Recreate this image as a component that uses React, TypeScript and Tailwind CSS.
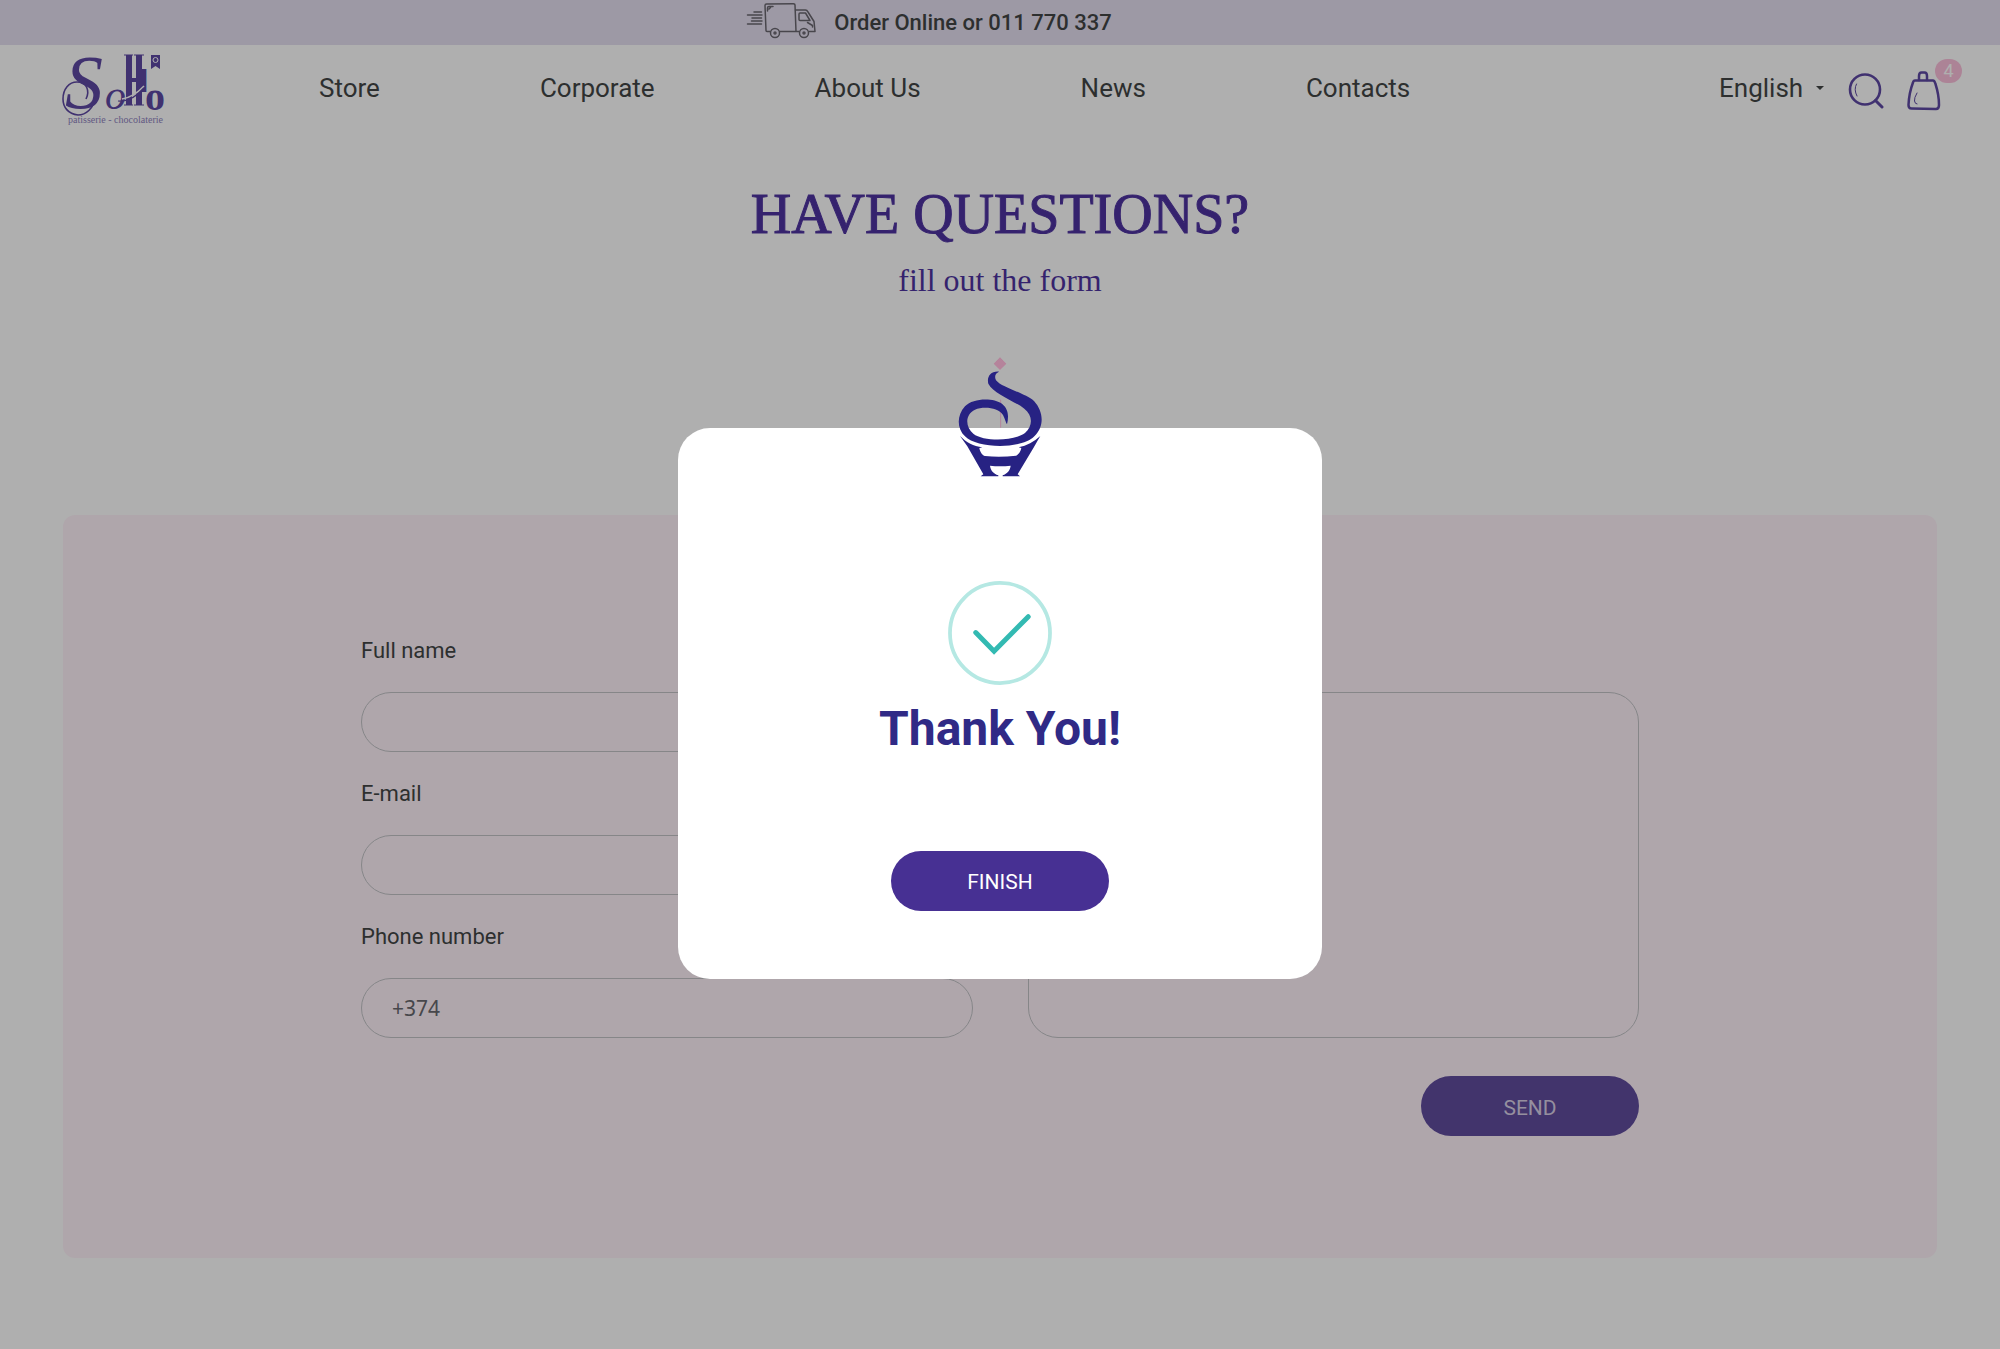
import { useState } from "react";

const navItems = [
  { href: "#store", label: "Store" },
  { href: "#corporate", label: "Corporate" },
  { href: "#about", label: "About Us" },
  { href: "#news", label: "News" },
  { href: "#contacts", label: "Contacts" },
];

const fields = [
  { id: "name", label: "Full name", type: "text", value: "" },
  { id: "email", label: "E-mail", type: "email", value: "" },
  { id: "phone", label: "Phone number", type: "tel", value: "+374" },
];

function Logo() {
  return (
    <svg className="overflow-visible" width="104" height="74" viewBox="0 0 104 74" fill="#4a3298">
      <text x="3" y="57" fontSize="76" fontStyle="italic" fontFamily="Liberation Serif, serif">
        S
      </text>
      <path
        d="M34 46C31 58 24 64 16 64C6 63 1 56 1 48C1 38 7 31 15 31C25 31 28 40 24 48"
        fill="none"
        stroke="#4a3298"
        strokeWidth="1.600"
      />
      <text x="43" y="58" fontSize="42" fontStyle="italic" fontFamily="Liberation Serif, serif">
        o
      </text>
      <text x="62" y="41" fontSize="34" fontWeight="700" fontFamily="Liberation Sans Narrow, Liberation Sans, sans-serif">
        H
      </text>
      <rect x="64" y="4" width="6" height="50" />
      <rect x="74" y="4" width="6" height="50" />
      <path d="M62 4H71M72 4H82M62 54H71M72 54H82" stroke="#4a3298" strokeWidth="1" />
      <path d="M60 48Q72 46 82 35" fill="none" stroke="#fff" strokeWidth="1.500" />
      <path d="M56 50Q70 51 82 37" fill="none" stroke="#4a3298" strokeWidth="1.200" />
      <text x="83" y="59" fontSize="40" fontWeight="700" fontFamily="Liberation Serif, serif">
        o
      </text>
      <path d="M89 4H98V18L93.500 15L89 18Z" />
      <circle cx="93.500" cy="9" r="2.500" fill="none" stroke="#fff" strokeWidth="1" />
      <text x="6" y="72" fontSize="10" opacity="0.7" fontFamily="Liberation Serif, serif">
        patisserie - chocolaterie
      </text>
    </svg>
  );
}

function TruckIcon() {
  return (
    <svg width="70" height="36" viewBox="0 1 70 36" fill="none" stroke="#58545e" strokeWidth="1.500" strokeLinecap="round" strokeLinejoin="round">
      <path d="M24 29.500H21Q20 29.500 20 28.500L19 3.500Q19 2 20.500 2L47.500 1.800Q49 1.800 49 3L50 29.500M34 29.500H53" />
      <path d="M49.500 8H59.500Q61 8 62 10L68 19.500L69 29.500H63.500" />
      <path d="M54 11H59.500L64 18.500H54Q53 18.500 53 17.500V12Q53 11 54 11Z" />
      <path d="M61.500 20.500L66.500 23.500V25" />
      <path d="M21.500 9V6Q21.500 4.500 23 4.500H27M23 7L24.500 5.500" />
      <circle cx="29" cy="31" r="4.500" />
      <circle cx="29" cy="31" r="1" />
      <circle cx="58" cy="31" r="4.500" />
      <circle cx="58" cy="31" r="1" />
      <path d="M8 10H15.500M1.500 13H16M6 16H15.500M5.500 19H16M1.500 22H15.500" />
    </svg>
  );
}

function SearchIcon() {
  return (
    <svg width="36" height="36" viewBox="0 0 36 36" fill="none" stroke="#4a3298" strokeWidth="2.600" strokeLinecap="round">
      <circle cx="17" cy="16.500" r="15" />
      <path d="M27.500 27.500L34 34" strokeWidth="3" />
      <path d="M8.500 11Q5.500 16.500 9 23" strokeWidth="1" />
    </svg>
  );
}

function BagIcon() {
  return (
    <svg width="34" height="40" viewBox="0 0 34 40" fill="none" stroke="#4a3298" strokeWidth="2.500" strokeLinecap="round" strokeLinejoin="round">
      <path d="M8 9.500H26Q27.500 9.500 28.500 13Q32 24 32 34Q32 38 29 38L4.500 37.500Q1.500 37.500 1.500 34Q2 22 6 11.500Q6.500 9.500 8 9.500Z" />
      <path d="M12 9V5Q12 1.500 14.500 1.500H17.500Q20 1.500 20 5V9" />
      <path d="M10 22Q7 27 7.500 30Q8 33 10 33" strokeWidth="1" />
    </svg>
  );
}

function CakeIcon() {
  return (
    <svg width="84" height="120" viewBox="84 50 252 360" fill="#272283" aria-hidden="true">
      <path d="M210 51L229 70L210 89L191 70Z" fill="#b5839b" />
      <path d="M212 178V262" stroke="#b5839b" strokeWidth="3" />
      <path d="M207 94C180 92 170 112 175 130C190 160 250 180 283 205C308 225 310 256 285 278C250 304 160 304 130 280C105 260 105 222 135 208C160 197 205 201 219 224C226 238 228 248 231 252C237 226 235 206 216 190C190 172 130 172 105 198C80 225 80 265 105 288C140 325 275 328 313 288C343 260 342 215 312 182C285 158 215 142 198 120C192 108 197 98 207 94Z" />
      <path d="M90 287C110 307 130 318 157 321L148 323C150 335 157 345 165 347Q210 352 258 346C266 343 272 333 274 323L266 321C290 316 312 305 331 287Q322 302 312 320L263 402L270 408H218V405C232 400 240 390 242 376Q210 380 180 376C182 390 190 400 205 405V408H152L160 402L112 318Z" />
    </svg>
  );
}

function ThankYouDialog({ onClose }: { onClose: () => void }) {
  return (
    <div className="fixed inset-0 flex items-center justify-center bg-[#303030]/39 pt-[58px]">
      <div
        role="dialog"
        aria-labelledby="dialog-title"
        className="relative flex w-[644px] flex-col items-center rounded-[32px] bg-white pt-[153px] pb-[68px]"
      >
        <div className="absolute -top-[71px]">
          <CakeIcon />
        </div>
        <svg width="104" height="104" viewBox="0 0 105 105" fill="none" strokeLinecap="round">
          <circle cx="52.500" cy="52.500" r="50.500" stroke="#b5e8e3" strokeWidth="3.800" />
          <path d="M28 52L46.500 71L81 36" stroke="#33bab2" strokeWidth="5" />
        </svg>
        <h2 id="dialog-title" className="mt-4 text-5xl leading-[56px] font-bold text-[#302a86]">
          Thank You!
        </h2>
        <button
          onClick={onClose}
          className="mt-[94px] h-[60px] w-[218px] rounded-full bg-[#473093] pt-[3px] text-[21px] text-white"
        >
          FINISH
        </button>
      </div>
    </div>
  );
}

export default function App() {
  const [open, setOpen] = useState(true);

  return (
    <div className="min-h-screen bg-white pb-[91px] font-[Roboto,sans-serif] text-[#2b2f2f]">
      <div className="flex h-[45px] items-center justify-center gap-[18px] bg-[#e2dcef] pr-[142px]">
        <div className="pb-1">
          <TruckIcon />
        </div>
        <span className="text-[22px] leading-7 font-medium">Order Online or 011 770 337</span>
      </div>

      <header className="flex h-[86px] items-center pr-[59px] pl-[62px]">
        <a href="#home" className="shrink-0" aria-label="SoHo">
          <Logo />
        </a>
        <nav className="ml-[153px] flex gap-40 text-[26px] leading-8 whitespace-nowrap">
          {navItems.map((item) => (
            <a key={item.href} href={item.href}>
              {item.label}
            </a>
          ))}
        </nav>
        <div className="ml-auto flex items-center">
          <label className="flex items-center gap-3 text-[26px] leading-8">
            <select aria-label="Language" className="appearance-none bg-transparent">
              <option>English</option>
            </select>
            <svg width="8" height="4" viewBox="0 0 8 4" fill="currentColor">
              <path d="M0 0H8L4 4Z" />
            </svg>
          </label>
          <div className="ml-6 flex items-center gap-[23px] pt-[5px]">
            <button aria-label="Search">
              <SearchIcon />
            </button>
            <button className="relative" aria-label="Cart">
              <BagIcon />
              <span className="absolute -top-3 left-7 flex h-6 w-[27px] items-center justify-center rounded-full bg-[#fbb8d7] text-lg text-white">
                4
              </span>
            </button>
          </div>
        </div>
      </header>

      <div className="pt-[51px] text-center font-['Liberation_Serif',serif] text-[#391a95]">
        <h1 className="text-[56px] leading-[64px] [-webkit-text-stroke:1px]">HAVE QUESTIONS?</h1>
        <p className="mt-[14px] text-[32px] leading-10">fill out the form</p>
      </div>

      <section className="mx-[63px] mt-[215px] rounded-xl bg-[#fff1f9] py-[122px]">
        <form className="mx-auto max-w-[1278px] text-[22px] leading-7" onSubmit={(e) => e.preventDefault()}>
          <div className="grid grid-cols-2 gap-[55px]">
            <div className="flex flex-col gap-7">
              {fields.map((field) => (
                <div key={field.id} className="flex flex-col gap-[27px]">
                  <label htmlFor={field.id}>{field.label}</label>
                  <input
                    id={field.id}
                    type={field.type}
                    defaultValue={field.value}
                    className="h-[60px] rounded-full border border-[#bcbcc0] bg-transparent px-[30px] font-['Noto_Sans',sans-serif] text-[21px] text-[#55565c]"
                  />
                </div>
              ))}
            </div>
            <div className="flex flex-col gap-[27px]">
              <label htmlFor="message">Message</label>
              <textarea
                id="message"
                className="flex-1 resize-none rounded-[30px] border border-[#bcbcc0] bg-transparent px-[30px] py-4"
              />
            </div>
          </div>
          <div className="mt-[38px] flex justify-end">
            <button
              type="submit"
              onClick={() => setOpen(true)}
              className="h-[60px] w-[218px] rounded-full bg-[#4d3692] pt-[3px] text-[21px] text-[#d4cbe4]"
            >
              SEND
            </button>
          </div>
        </form>
      </section>

      {open && <ThankYouDialog onClose={() => setOpen(false)} />}
    </div>
  );
}
